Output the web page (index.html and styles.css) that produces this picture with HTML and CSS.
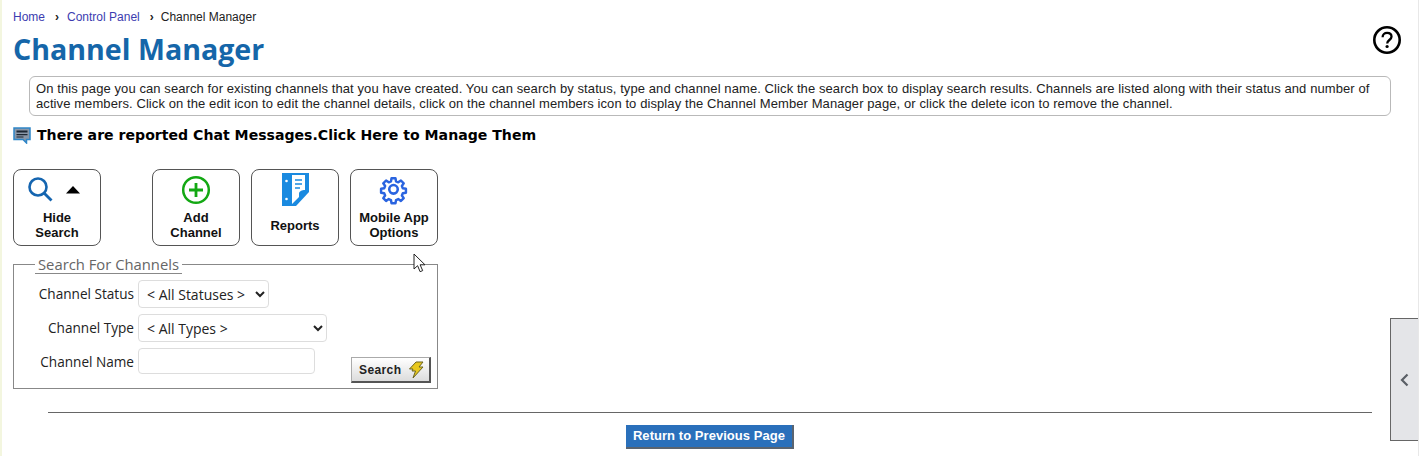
FILE: index.html
```html
<!DOCTYPE html>
<html lang="en">
<head>
    <meta charset="UTF-8">
    <title>Channel Manager</title>
    <link rel="stylesheet" href="styles.css">
</head>
<body>
    <div class="page">
        <div class="breadcrumb">
            <a href="#">Home</a>
            <span class="sep sep-first">›</span>
            <a href="#">Control Panel</a>
            <span class="sep sep-second">›</span>
            <span>Channel Manager</span>
        </div>

        <div class="title-row">
            <h1>Channel Manager</h1>
            <svg class="help-icon" width="30" height="30" viewBox="0 0 30 30">
                <circle cx="15" cy="15" r="12.7" fill="none" stroke="#000" stroke-width="2.6"/>
                <path d="M10.6 12.2c0-2.7 2-4.3 4.5-4.3s4.4 1.5 4.4 3.8c0 3.2-4.3 3.400-4.300 6.700" fill="none" stroke="#000" stroke-width="2.300"/>
                <circle cx="15.100" cy="21.500" r="1.600"/>
            </svg>
        </div>

        <div class="help-text">
            On this page you can search for existing channels that you have created. You can search by status, type and channel name. Click the search box to display search results. Channels are listed along with their status and number of active members. Click on the edit icon to edit the channel details, click on the channel members icon to display the Channel Member Manager page, or click the delete icon to remove the channel.
        </div>

        <a class="reported" href="#">
            <svg width="18" height="17" viewBox="0 0 18 17">
                <path d="M1 1h16v11.500h-3.500v3.500l-3.500-3.500H1z" fill="#8a97a8" stroke="#2f86c8" stroke-width="1.500"/>
                <path d="M3.500 3.500h11v2h-11zM3.500 7h11v1.300h-11zM3.500 9.500h7v1h-7z" fill="#1d2733"/>
            </svg>
            <span>There are reported Chat Messages.Click Here to Manage Them</span>
        </a>

        <div class="toolbar">
            <a class="tool-btn tool-btn-hide" href="#">
                <span class="tool-icon hide-icons">
                    <svg width="26" height="28" viewBox="0 0 26 28">
                        <circle cx="11" cy="11" r="8.500" fill="none" stroke="#1565b0" stroke-width="2.600"/>
                        <path d="M17 17l7.500 7.500" stroke="#1565b0" stroke-width="2.800" fill="none"/>
                    </svg>
                    <svg class="caret" width="14" height="8" viewBox="0 0 14 8"><path d="M7 0l7 7.500H0z" fill="#000"/></svg>
                </span>
                <span class="tool-label">Hide<br>Search</span>
            </a>
            <a class="tool-btn" href="#">
                <span class="tool-icon">
                    <svg width="30" height="30" viewBox="0 0 30 30">
                        <circle cx="15" cy="15" r="12.800" fill="none" stroke="#13a813" stroke-width="2.500"/>
                        <path d="M15 8v14M8 15h14" stroke="#13a813" stroke-width="2.800" fill="none"/>
                    </svg>
                </span>
                <span class="tool-label">Add<br>Channel</span>
            </a>
            <a class="tool-btn tool-btn-reports" href="#">
                <span class="tool-icon">
                    <svg width="27" height="33" viewBox="0 0 27 33">
                        <path d="M0 0h27v19L14 33H0z" fill="#1a8ae0"/>
                        <path d="M10 2h13v15c-3 0-6 1-6 4v3l-7 7z" fill="#fff"/>
                        <path d="M13 7h7M13 11h7M13 15h5" stroke="#1a8ae0" stroke-width="1.300"/>
                        <circle cx="4.500" cy="8" r="1.300" fill="#fff"/>
                        <circle cx="4.500" cy="26" r="1.300" fill="#fff"/>
                    </svg>
                </span>
                <span class="tool-label">Reports</span>
            </a>
            <a class="tool-btn" href="#">
                <span class="tool-icon gear-icon">
                    <svg width="31" height="31" viewBox="0 0 24 24">
                        <path d="M10.300 2.500h3.400l.5 2.700 1.900.8 2.300-1.600 2.400 2.400-1.600 2.300.8 1.900 2.700.5v3.400l-2.700.5-.8 1.900 1.600 2.300-2.400 2.400-2.300-1.600-1.900.8-.5 2.700h-3.400l-.5-2.700-1.900-.8-2.300 1.600-2.400-2.400 1.600-2.300-.8-1.900-2.700-.5v-3.400l2.700-.5.8-1.900-1.600-2.300 2.400-2.400 2.300 1.600 1.900-.8z" transform="translate(12 12) scale(.9) translate(-12 -13)" fill="none" stroke="#2a64e0" stroke-width="2.100" stroke-linejoin="round"/>
                        <circle cx="12" cy="11.100" r="3.300" fill="none" stroke="#2a64e0" stroke-width="2"/>
                    </svg>
                </span>
                <span class="tool-label">Mobile App<br>Options</span>
            </a>
        </div>

        <fieldset class="search-box">
            <legend>Search For Channels</legend>
            <div class="search-row">
                <label for="status">Channel Status</label>
                <select id="status" class="select-status"><option>&lt; All Statuses &gt;</option></select>
            </div>
            <div class="search-row">
                <label for="type">Channel Type</label>
                <select id="type" class="select-type"><option>&lt; All Types &gt;</option></select>
            </div>
            <div class="search-row search-row-name">
                <label for="name">Channel Name</label>
                <input id="name" type="text">
            </div>
            <button class="search-btn" type="button">
                Search
                <svg width="22" height="18" viewBox="0 0 18 18">
                    <path d="M9 1h7l-4 5h4L6 17l2.500-7H5l1-2H2.500z" fill="#e8c81e" stroke="#6b6420" stroke-width="1"/>
                </svg>
            </button>
        </fieldset>

        <hr class="divider">

        <div class="return-row">
            <a class="return-btn" href="#">Return to Previous Page</a>
        </div>
    </div>

    <div class="side-tab">
        <svg width="9" height="14" viewBox="0 0 9 14"><path d="M7.500 1.500L2 7l5.500 5.500" fill="none" stroke="#5a5f66" stroke-width="2.200"/></svg>
    </div>

    <svg class="cursor" width="15" height="21" viewBox="0 0 15 21">
        <path d="M1 1v15l3.600-3.300 2.500 6 2.600-1.100-2.600-5.800h4.900z" fill="#fff" stroke="#222" stroke-width="1"/>
    </svg>
</body>
</html>
```

FILE: styles.css
```css
html, body {
    margin: 0;
    height: 456px;
    overflow: hidden;
}
body {
    font-family: "Liberation Sans", Arial, sans-serif;
    background: white;
    color: #000;
    border-left: 2px solid #f3f6df;
    border-right: 1px solid #e8e8e8;
    box-sizing: border-box;
    position: relative;
}
a {
    text-decoration: none;
    color: inherit;
}
.page {
    padding: 10px 0 0 11px;
}
.breadcrumb {
    font-size: 12px;
    line-height: 14px;
    color: #222;
    display: flex;
}
.breadcrumb a {
    color: #3c3cb0;
}
.sep {
    font-weight: bold;
}
.sep-first {
    margin: 0 8px 0 10px;
}
.sep-second {
    margin: 0 7px 0 10px;
}
.title-row {
    display: flex;
    justify-content: space-between;
    align-items: flex-start;
    margin-top: 4px;
    height: 48px;
    padding-right: 16px;
}
.title-row h1 {
    margin: 0;
    font-family: "Open Sans", sans-serif;
    font-size: 28.6px;
    line-height: 42px;
    font-weight: bold;
    color: #1566a9;
}
.help-icon {
    margin-top: -3px;
}
.help-text {
    margin-left: 16px;
    margin-right: 27px;
    padding: 4px 6px;
    height: 30px;
    border: 1px solid #b9b9b9;
    border-radius: 6px;
    font-size: 13px;
    line-height: 15px;
    letter-spacing: 0.09px;
    color: #222;
}
.reported {
    display: flex;
    align-items: center;
    gap: 6px;
    margin-top: 9px;
    height: 20px;
    font-family: "DejaVu Sans", Verdana, sans-serif;
    font-size: 14.1px;
    font-weight: bold;
}
.toolbar {
    display: flex;
    gap: 11px;
    margin-top: 24px;
}
.tool-btn {
    width: 88px;
    height: 77px;
    box-sizing: border-box;
    border: 1px solid #555;
    border-radius: 8px;
    display: flex;
    flex-direction: column;
    align-items: center;
    font-size: 13px;
    font-weight: bold;
    line-height: 15px;
    text-align: center;
    color: #111;
}
.tool-btn-hide {
    margin-right: 40px;
}
.tool-icon {
    height: 36px;
    display: flex;
    align-items: flex-start;
    justify-content: center;
    padding-top: 5px;
}
.hide-icons {
    gap: 13px;
    height: 35px;
    padding-top: 6px;
    padding-right: 7px;
}
.gear-icon {
    padding-right: 2px;
}
.caret {
    margin-top: 10px;
}
.tool-btn-reports .tool-icon {
    padding-top: 3px;
    height: 42px;
}
.tool-label {
    display: block;
    margin-top: -1px;
}
.tool-btn-reports .tool-label {
    margin-top: 3px;
}
.search-box {
    position: relative;
    width: 425px;
    height: 135px;
    box-sizing: border-box;
    margin: 8px 0 0;
    padding: 3px 0 0;
    border: 1px solid #888;
    font-family: "Open Sans", sans-serif;
    font-size: 13.6px;
    color: #222;
}
.search-box legend {
    margin-left: 21px;
    padding: 1px 3px 0;
    color: #666;
    line-height: 18px;
    border-bottom: 1px solid #888;
    font-size: 14.8px;
}
.search-row {
    display: flex;
    align-items: center;
    height: 34px;
}
.search-row-name {
    height: 32px;
}
.search-row label {
    width: 120px;
    text-align: right;
    margin-right: 4px;
    margin-top: -2px;
}
.search-row-name label {
    margin-top: 0;
}
.search-row select, .search-row input {
    font-family: "Open Sans", sans-serif;
    font-size: 14px;
    color: #222;
    background: white;
    box-sizing: border-box;
    border: 1px solid #ddd;
    border-radius: 4px;
    padding: 0 0 0 4px;
    margin: 0;
}
.select-status {
    width: 131px;
    height: 28px;
}
.select-type {
    width: 189px;
    height: 28px;
}
.search-row input {
    width: 177px;
    height: 26px;
}
.search-btn {
    position: absolute;
    right: 6px;
    bottom: 5px;
    width: 80px;
    height: 26px;
    box-sizing: border-box;
    display: flex;
    align-items: center;
    gap: 4px;
    padding: 0 0 0 7px;
    font-family: "Liberation Sans", Arial, sans-serif;
    font-size: 12px;
    font-weight: bold;
    letter-spacing: 0.4px;
    color: #222;
    background: linear-gradient(#ffffff, #dcdcdc);
    border: 1px solid #aaa;
    border-right: 2px solid #555;
    border-bottom: 2px solid #555;
}
.divider {
    margin: 23px 46px 0 35px;
    border: 0;
    border-top: 1px solid #666;
}
.return-row {
    display: flex;
    justify-content: center;
    margin-top: 12px;
    padding-right: 11px;
}
.return-btn {
    display: block;
    width: 168px;
    height: 24px;
    box-sizing: border-box;
    background: #2a70bb;
    border-right: 2px solid #5a6470;
    border-bottom: 2px solid #5a6470;
    font-size: 13px;
    font-weight: bold;
    line-height: 21px;
    letter-spacing: 0.05px;
    text-align: center;
    color: white;
}
.side-tab {
    position: absolute;
    right: 0;
    top: 318px;
    width: 28px;
    height: 123px;
    box-sizing: border-box;
    background: #e4e5e8;
    border: 1px solid #666;
    border-right: 0;
    display: flex;
    align-items: center;
    padding-left: 9px;
}
.cursor {
    position: absolute;
    left: 411px;
    top: 253px;
}
```
